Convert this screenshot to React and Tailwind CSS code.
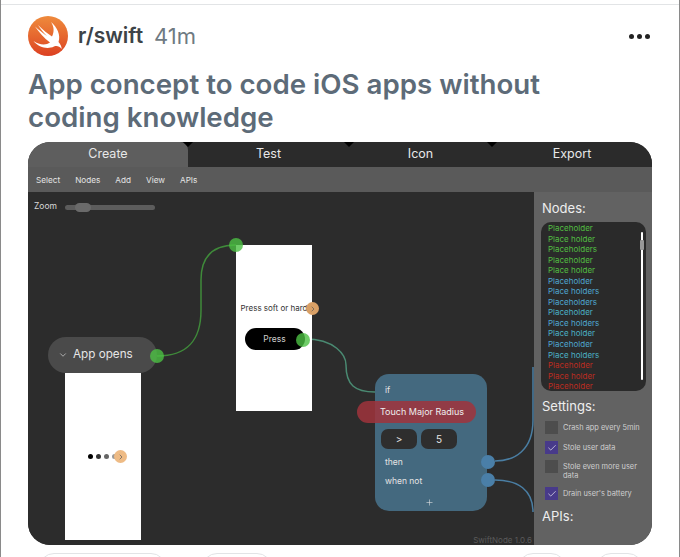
import React from 'react'
import { ChevronDown, ChevronRight, Check, Plus } from 'lucide-react'

const tabs = [
    { label: 'Create', w: 'w-[160px]', active: true },
    { label: 'Test', w: 'w-[161px]' },
    { label: 'Icon', w: 'w-[143px]' },
    { label: 'Export', w: 'w-[160px]' },
]

const menu = ['Select', 'Nodes', 'Add', 'View', 'APIs']

const G = 'text-[#52bd42]'
const B = 'text-[#4fa6cf]'
const T = 'text-[#4ab0c4]'
const R = 'text-[#bb2c21]'

const nodes = [
    ['Placeholder', G], ['Place holder', G], ['Placeholders', G], ['Placeholder', G], ['Place holder', G],
    ['Placeholder', B], ['Place holders', B], ['Placeholders', B], ['Placeholder', T], ['Place holders', B],
    ['Place holder', T], ['Placeholder', B], ['Place holders', T],
    ['Placeholder', R], ['Place holder', R], ['Placeholder', R],
]

const settings = [
    { label: 'Crash app every 5min', on: false, mt: 'mt-[7px]' },
    { label: 'Stole user data', on: true, mt: 'mt-[7px]' },
    { label: 'Stole even more user data', on: false, mt: 'mt-[6px]' },
    { label: "Drain user's battery", on: true, mt: 'mt-[7px]' },
]

const SwiftLogo = () => (
    <div className="w-10 h-10 rounded-full bg-gradient-to-b from-[#ee8a3c] to-[#dc3f22] shrink-0">
        <svg viewBox="0 0 40 40" width="40" height="40">
            <path fill="#fff" d="M23 6C29 11 33 19 30.5 26C32.5 28.5 34 31 33.5 33C31.5 30 28.5 29.5 26 30.5C20 33.5 11 32 5.5 25C11 29 18 29.5 22 26.5C16 22 11 16 7 10.5C11 14 16 18 19 20C15 16.5 12 12 10 9C15 14 20 18 24 20.5C26.5 15.5 26 10.5 23 6Z" />
        </svg>
    </div>
)

const Port = ({ className }) => (
    <div className={`absolute w-[14px] h-[14px] rounded-full ${className}`} />
)

const Notch = ({ className }) => (
    <div className={`absolute top-0 w-0 h-0 border-x-[5px] border-x-transparent border-t-[5px] border-t-black ${className}`} />
)

const Canvas = () => (
    <div className="relative flex-1 bg-[#2c2c2c] overflow-hidden">
        <svg className="absolute inset-0" width="506" height="353" fill="none">
            <path d="M129 164C160 164 173 148 173 118L173 88C173 63 187 53 208 53" stroke="#3f8a3a" strokeWidth="1.5" />
            <path d="M277 147C307 147 318 163 318 173C318 193 327 200 347 200" stroke="#4a8a72" strokeWidth="1.5" />
            <path d="M467 269C487 269 505 258 505 228L505 175" stroke="#4a7ea3" strokeWidth="1.5" />
            <path d="M467 288C490 288 505 298 505 320" stroke="#4a7ea3" strokeWidth="1.5" />
        </svg>

        {/* zoom slider */}
        <span className="absolute left-[6px] top-[9px] text-[8.5px] leading-[11px] text-[#d8d8d8]">Zoom</span>
        <div className="absolute left-[37px] top-[13px] w-[90px] h-[5px] rounded-full bg-[#5c5c5c]" />
        <div className="absolute left-[47px] top-[11px] w-[16px] h-[9px] rounded-full bg-[#6a6a6a]" />

        {/* first screen */}
        <div className="absolute left-[37px] top-[181px] w-[76px] h-[167px] bg-white" />
        <div className="absolute left-[20px] top-[145px] w-[109px] h-[36px] rounded-full bg-[#4a4a4a] flex items-center pl-[10px] gap-[5px] text-[#e6e6e6]">
            <ChevronDown size={10} strokeWidth={1.5} />
            <span className="text-[11.7px]">App opens</span>
        </div>
        <Port className="left-[122px] top-[157px] bg-[#4cc043]/80" />
        <div className="absolute left-[60px] top-[262px] flex gap-[3px]">
            <div className="w-[5px] h-[5px] rounded-full bg-black" />
            <div className="w-[5px] h-[5px] rounded-full bg-[#333]" />
            <div className="w-[5px] h-[5px] rounded-full bg-[#666]" />
            <div className="w-[5px] h-[5px] rounded-full bg-[#999]" />
        </div>
        <div className="absolute left-[86px] top-[258px] w-[13px] h-[13px] rounded-full bg-[#eebb85] flex items-center justify-center text-[#555]">
            <ChevronRight size={8} />
        </div>

        {/* second screen */}
        <div className="absolute left-[208px] top-[53px] w-[76px] h-[166px] bg-white flex flex-col items-center">
            <span className="mt-[57px] text-[8px] leading-[12px] whitespace-nowrap text-[#333]">Press soft or hard</span>
            <div className="mt-[14px] ml-[1px] w-[60px] h-[22px] rounded-full bg-black text-[#ccc] text-[8.5px] flex items-center justify-center">Press</div>
        </div>
        <Port className="left-[201px] top-[46px] bg-[#4cc043]/80" />
        <Port className="left-[268px] top-[141px] bg-[#4cc043]/80" />
        <div className="absolute left-[278px] top-[110px] w-[13px] h-[13px] rounded-full bg-[#d9a066] flex items-center justify-center text-[#555]">
            <ChevronRight size={8} />
        </div>

        {/* if node */}
        <div className="absolute left-[347px] top-[182px] w-[112px] h-[137px] rounded-[14px] bg-[#44697f] text-[#e4e4e4] text-[8.5px]">
            <span className="absolute left-[10px] top-[10px]">if</span>
            <div className="absolute left-[6px] top-[55px] flex gap-[4px] text-[10px]">
                <div className="w-[36px] h-[20px] rounded-[7px] bg-[#2e2e2e] flex items-center justify-center">&gt;</div>
                <div className="w-[36px] h-[20px] rounded-[7px] bg-[#2e2e2e] flex items-center justify-center">5</div>
            </div>
            <span className="absolute left-[10px] top-[82px]">then</span>
            <span className="absolute left-[10px] top-[101px]">when not</span>
            <Plus className="absolute left-[50px] top-[124px]" size={9} strokeWidth={1.5} />
        </div>
        <div className="absolute left-[329px] top-[209px] w-[119px] h-[22px] rounded-full bg-[#a0343c]/85 flex items-center pl-[23px] text-[9px] text-[#eee]">Touch Major Radius</div>
        <Port className="left-[453px] top-[263px] bg-[#4a7fa8]" />
        <Port className="left-[453px] top-[281px] bg-[#4a7fa8]" />

        <span className="absolute right-[2px] bottom-[-1px] text-[8px] leading-[12px] text-[#5a5a5a]">SwiftNode 1.0.6</span>
    </div>
)

const Sidebar = () => (
    <div className="w-[118px] bg-[#626262] pl-[8px] pr-[6px] pt-[8px] text-[#eee]">
        <div className="text-[13px] leading-[16px]">Nodes:</div>
        <div className="relative mt-[6px] -ml-px h-[169px] rounded-[10px] bg-[#2a2a2a] pl-[7px] pt-[1px] text-[8px] leading-[10.55px]">
            {nodes.map(([name, color], i) => (
                <div key={i} className={color}>{name}</div>
            ))}
            <div className="absolute right-[3px] top-[10px] bottom-[11px] w-[2px] rounded-full bg-white" />
            <div className="absolute right-[2px] top-[18px] w-[4px] h-[10px] rounded-[1px] bg-[#999]" />
        </div>
        <div className="mt-[7px] text-[13px] leading-[16px]">Settings:</div>
        <div>
            {settings.map(s => (
                <div key={s.label} className={`flex gap-[5px] items-start ${s.mt}`}>
                    <div className={`w-[13px] h-[13px] shrink-0 ml-[3px] flex items-center justify-center ${s.on ? 'bg-[#483a8a]' : 'bg-[#4d4d4d]'}`}>
                        {s.on && <Check size={10} strokeWidth={1.5} className="text-white" />}
                    </div>
                    <span className="text-[7.4px] leading-[9px] pt-[2px] text-[#cfcfcf]">{s.label}</span>
                </div>
            ))}
        </div>
        <div className="mt-[8px] text-[13px] leading-[16px]">APIs:</div>
    </div>
)

export default function App() {
    return (
        <div className="w-[680px] h-[557px] overflow-hidden bg-white border-x border-[#8a8a8a] font-[Inter,sans-serif]">
            <div className="h-[5px] border-b border-[#e2e4e6]" />
            <div className="flex items-center pl-[27px] pr-[27px] pt-[11px]">
                <SwiftLogo />
                <span className="ml-[10px] text-[21px] font-semibold text-[#3d4347]">r/swift</span>
                <span className="ml-[11px] text-[22px] text-[#6f7a82]">41m</span>
                <div className="ml-auto flex gap-[3px] pr-[2px]">
                    <div className="w-[5px] h-[5px] rounded-full bg-[#222]" />
                    <div className="w-[5px] h-[5px] rounded-full bg-[#222]" />
                    <div className="w-[5px] h-[5px] rounded-full bg-[#222]" />
                </div>
            </div>
            <h1 className="mt-[12px] pl-[27px] pr-[100px] text-[27.7px] leading-[33px] font-semibold text-[#5d6b78]">App concept to code iOS apps without coding knowledge</h1>
            <div className="relative ml-[27px] mt-[8px] w-[624px] h-[403px] rounded-[22px] overflow-hidden flex flex-col bg-[#2c2c2c]">
                <div className="flex h-[25px] text-[12.5px] text-[#e8e8e8] shrink-0">
                    {tabs.map(t => (
                        <div key={t.label} className={`${t.w} flex items-center justify-center ${t.active ? 'bg-[#5e5e5e] rounded-tr-[8px]' : 'bg-[#2b2b2b]'}`}>{t.label}</div>
                    ))}
                </div>
                <Notch className="left-[155px]" />
                <Notch className="left-[316px]" />
                <Notch className="left-[459px]" />
                <div className="flex items-center h-[25px] bg-[#5a5a5a] pl-[8px] pt-[1px] gap-[15px] text-[8.2px] text-[#e4e4e4] shrink-0">
                    {menu.map(m => <span key={m}>{m}</span>)}
                </div>
                <div className="flex flex-1 min-h-0">
                    <Canvas />
                    <Sidebar />
                </div>
            </div>
            <div className="flex ml-[38px] mt-[8px]">
                <div className="w-[127px] h-[30px] rounded-full border border-[#e2e4e6]" />
                <div className="ml-[36px] w-[70px] h-[30px] rounded-full border border-[#e2e4e6]" />
                <div className="ml-[246px] w-[48px] h-[30px] rounded-full border border-[#e2e4e6]" />
                <div className="ml-[30px] w-[47px] h-[30px] rounded-full border border-[#e2e4e6]" />
            </div>
        </div>
    )
}
